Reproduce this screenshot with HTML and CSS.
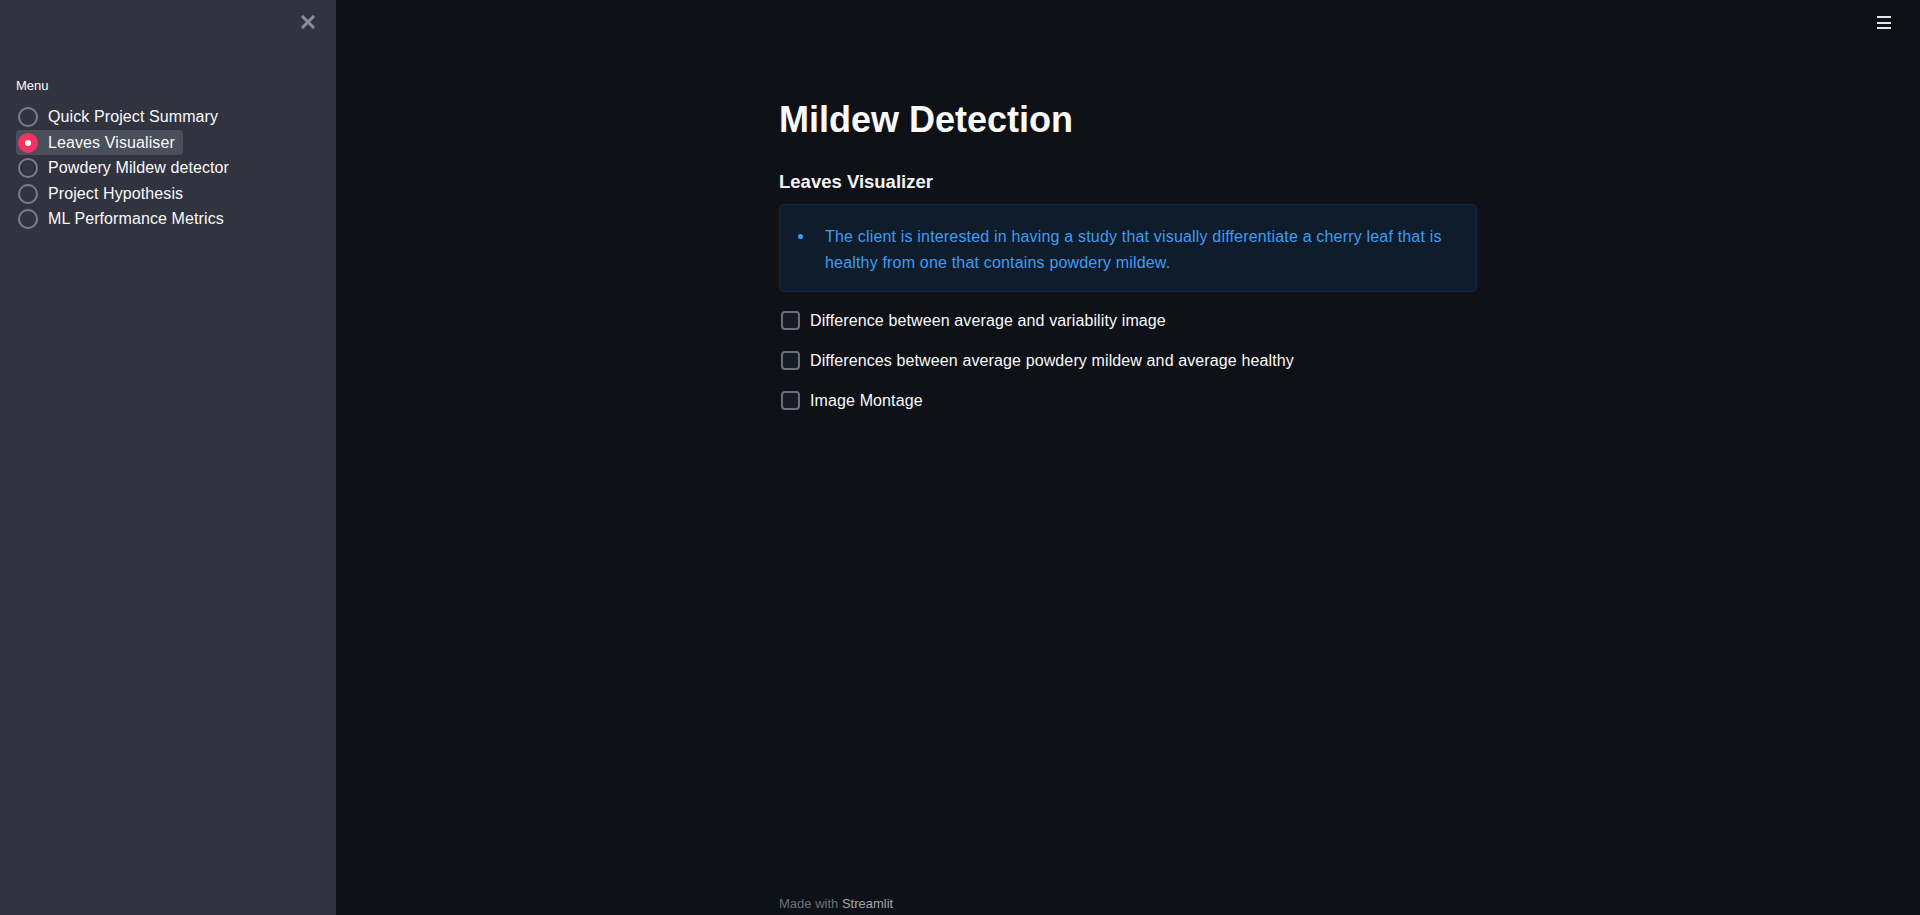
FILE: index.html
```html
<!DOCTYPE html>
<html lang="en">
<head>
<meta charset="utf-8">
<title>Mildew Detection</title>
<link rel="stylesheet" href="styles.css">
</head>
<body>
<div class="app">
  <aside class="sidebar">
    <div class="sidebar-top">
      <button class="close-btn" aria-label="Close sidebar">
        <svg width="14" height="14" viewBox="0 0 14 14"><path d="M2 2 L12 12 M12 2 L2 12" stroke="#8b8e97" stroke-width="3" stroke-linecap="square" fill="none"/></svg>
      </button>
    </div>
    <div class="menu-label">Menu</div>
    <div class="radio-group">
      <label class="radio"><span class="radio-circle"></span><span class="radio-text">Quick Project Summary</span></label>
      <label class="radio radio-active"><span class="radio-circle radio-checked"></span><span class="radio-text">Leaves Visualiser</span></label>
      <label class="radio"><span class="radio-circle"></span><span class="radio-text">Powdery Mildew detector</span></label>
      <label class="radio"><span class="radio-circle"></span><span class="radio-text">Project Hypothesis</span></label>
      <label class="radio"><span class="radio-circle"></span><span class="radio-text">ML Performance Metrics</span></label>
    </div>
  </aside>
  <main class="main">
    <button class="menu-btn" aria-label="Main menu">
      <span class="bar"></span><span class="bar"></span><span class="bar"></span>
    </button>
    <div class="block">
      <h1 class="title">Mildew Detection</h1>
      <h3 class="subtitle">Leaves Visualizer</h3>
      <div class="info">
        <ul class="info-list">
          <li class="info-item"><span class="dot"></span><span class="info-text">The client is interested in having a study that visually differentiate a cherry leaf that is healthy from one that contains powdery mildew.</span></li>
        </ul>
      </div>
      <div class="checks">
        <label class="check"><span class="box"></span><span class="check-text">Difference between average and variability image</span></label>
        <label class="check"><span class="box"></span><span class="check-text">Differences between average powdery mildew and average healthy</span></label>
        <label class="check"><span class="box"></span><span class="check-text">Image Montage</span></label>
      </div>
    </div>
    <footer class="footer">
      <span class="footer-made">Made with</span> <span class="footer-brand">Streamlit</span>
    </footer>
  </main>
</div>
</body>
</html>
```
FILE: styles.css
```css
* { box-sizing: border-box; }
html, body {
  margin: 0;
  padding: 0;
  height: 100%;
}
body {
  background: #0e1117;
  color: #fafafa;
  font-family: "Liberation Sans", Arial, sans-serif;
  font-size: 16px;
  overflow: hidden;
}
.app {
  display: flex;
  height: 915px;
}
.sidebar {
  width: 336px;
  flex: 0 0 336px;
  background: #31333f;
  padding: 0 16px;
  display: flex;
  flex-direction: column;
}
.sidebar-top {
  height: 44px;
  display: flex;
  justify-content: flex-end;
  align-items: flex-start;
  padding-top: 15px;
  padding-right: 5px;
}
.close-btn {
  background: none;
  border: 0;
  padding: 0;
  width: 14px;
  height: 14px;
  display: block;
  cursor: pointer;
}
.close-btn svg { display: block; }
.menu-label {
  margin-top: 31.8px;
  font-size: 13px;
  line-height: 20.8px;
  color: #fafafa;
}
.radio-group {
  margin-top: 7.7px;
  display: flex;
  flex-direction: column;
  align-items: flex-start;
}
.radio {
  height: 25.5px;
  display: flex;
  align-items: center;
  padding: 0 8px 0 2px;
  border-radius: 4px;
  cursor: pointer;
}
.radio-active {
  background: #4b4e5b;
}
.radio-circle {
  width: 20px;
  height: 20px;
  border-radius: 50%;
  border: 2px solid #7b7e87;
  flex: 0 0 20px;
  display: flex;
  align-items: center;
  justify-content: center;
}
.radio-checked {
  background: #f6335f;
  border-color: #f6335f;
}
.radio-checked::after {
  content: "";
  width: 6px;
  height: 6px;
  border-radius: 50%;
  background: #ffffff;
}
.radio-text {
  margin-left: 10px;
  font-size: 16px;
  line-height: 20px;
  letter-spacing: 0.1px;
  color: #fafafa;
  white-space: nowrap;
}
.main {
  flex: 1;
  position: relative;
  display: flex;
  flex-direction: column;
  min-width: 0;
}
.menu-btn {
  position: absolute;
  top: 16px;
  right: 29px;
  width: 14px;
  height: 13px;
  background: none;
  border: 0;
  padding: 0;
  display: flex;
  flex-direction: column;
  justify-content: space-between;
}
.bar {
  display: block;
  width: 14px;
  height: 2px;
  background: #e6e6e6;
}
.block {
  flex: 1;
  width: 730px;
  margin: 0 auto;
  padding: 98px 16px 0;
}
.title {
  margin: 0;
  font-size: 36px;
  line-height: 43.2px;
  font-weight: 700;
  color: #fafafa;
}
.subtitle {
  margin: 29.3px 0 0;
  font-size: 18.5px;
  line-height: 22.2px;
  font-weight: 700;
  color: #f4f4f4;
}
.info {
  margin-top: 11.3px;
  height: 88px;
  background: #0f1c2b;
  border: 1px solid #14283d;
  border-radius: 4px;
  padding: 19px 16px 16px;
}
.info-list {
  margin: 0;
  padding: 0;
  list-style: none;
}
.info-item {
  display: flex;
  align-items: flex-start;
}
.dot {
  flex: 0 0 5px;
  width: 5px;
  height: 5px;
  border-radius: 50%;
  background: #3d9df3;
  margin: 10.3px 22px 0 2px;
}
.info-text {
  font-size: 16px;
  line-height: 25.6px;
  letter-spacing: 0.18px;
  color: #3d9df3;
}
.checks {
  margin-top: 16.5px;
  display: flex;
  flex-direction: column;
  gap: 16px;
}
.check {
  height: 24px;
  display: flex;
  align-items: center;
  cursor: pointer;
}
.box {
  width: 19px;
  height: 19px;
  flex: 0 0 19px;
  margin-left: 2px;
  border: 2px solid #6c6f78;
  border-radius: 4px;
  background: #161a22;
}
.check-text {
  margin-left: 10px;
  font-size: 16px;
  line-height: 24px;
  letter-spacing: 0.12px;
  color: #fafafa;
}
.footer {
  width: 730px;
  margin: 0 auto;
  padding: 0 16px 3px;
  font-size: 13px;
  line-height: 16px;
}
.footer-made { color: #6d7078; }
.footer-brand { color: #a3a5ab; }
```
